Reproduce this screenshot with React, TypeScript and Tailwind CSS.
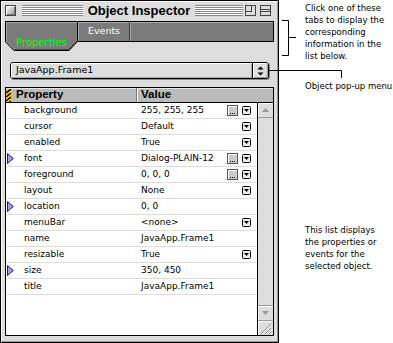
import React from 'react';

type Row = { name: string; value: string; dots?: boolean; drop?: boolean; tri?: boolean };

const rows: Row[] = [
  { name: 'background', value: '255, 255, 255', dots: true, drop: true },
  { name: 'cursor', value: 'Default', drop: true },
  { name: 'enabled', value: 'True', drop: true },
  { name: 'font', value: 'Dialog-PLAIN-12', dots: true, drop: true, tri: true },
  { name: 'foreground', value: '0, 0, 0', dots: true, drop: true },
  { name: 'layout', value: 'None', drop: true },
  { name: 'location', value: '0, 0', tri: true },
  { name: 'menuBar', value: '<none>', drop: true },
  { name: 'name', value: 'JavaApp.Frame1' },
  { name: 'resizable', value: 'True', drop: true },
  { name: 'size', value: '350, 450', tri: true },
  { name: 'title', value: 'JavaApp.Frame1' },
];

function Tri() {
  return (
    <svg width="7" height="11" viewBox="0 0 7 11">
      <polygon points="0.5,0.5 6.3,5.5 0.5,10.5" fill="#9c9cff" stroke="#222" strokeWidth="1" strokeLinejoin="round" />
    </svg>
  );
}

function Dots() {
  return (
    <div className="w-[11px] h-[11px] border border-[#555555] bg-[#cccccc] shadow-[inset_1px_1px_0_#ffffff] flex items-end justify-center gap-[1px] pb-[1px]">
      <i className="block w-[1px] h-[1px] bg-black" />
      <i className="block w-[1px] h-[1px] bg-black" />
      <i className="block w-[1px] h-[1px] bg-black" />
    </div>
  );
}

function Drop() {
  return (
    <svg width="9" height="9" viewBox="0 0 9 9">
      <rect x="0.5" y="0.5" width="8" height="8" rx="1" fill="#eeeeee" stroke="#000" />
      <polygon points="2,3 7,3 4.5,6" fill="#000" />
    </svg>
  );
}

function Stripes({ w }: { w: string }) {
  return (
    <div
      className={`${w} h-[11px] bg-[repeating-linear-gradient(to_bottom,#888888_0px,#888888_1px,#ffffff_1px,#ffffff_2px)]`}
    />
  );
}

function TitleBar() {
  return (
    <div className="h-[19px] shrink-0 flex items-center pl-[4px] pr-[7px]">
      <div className="w-[11px] h-[11px] border border-[#444444] bg-[linear-gradient(135deg,#ffffff,#999999)] shadow-[inset_1px_1px_0_#ffffff,inset_-1px_-1px_0_#777777]" />
      <div className="ml-[6px] w-[61px]">
        <Stripes w="w-[61px]" />
      </div>
      <div className="flex-1 text-center font-['Liberation_Sans',sans-serif] font-bold text-[13px] leading-[19px]">
        Object Inspector
      </div>
      <Stripes w="w-[48px]" />
      <svg className="ml-[2px]" width="11" height="11" viewBox="0 0 11 11">
        <rect x="0.5" y="0.5" width="10" height="10" fill="#dddddd" stroke="#444" />
        <rect x="0.5" y="0.5" width="6" height="6" fill="none" stroke="#444" />
      </svg>
      <svg className="ml-[4px]" width="11" height="11" viewBox="0 0 11 11">
        <rect x="0.5" y="0.5" width="10" height="10" fill="#dddddd" stroke="#444" />
        <path d="M1 4.5H10M1 6.5H10" stroke="#444" />
      </svg>
    </div>
  );
}

function Tabs() {
  return (
    <div className="flex items-start h-[30px] shrink-0">
      <div className="relative w-[73px] h-[30px] flex items-end justify-center pb-[3px]">
        <svg className="absolute left-0 top-0" width="73" height="30" viewBox="0 0 73 30">
          <polygon points="0,0 73,0 73,20 64,30 9,30 0,21" fill="#7b7b7b" />
          <path d="M1.5,1 V20.5 L9.5,28.5" fill="none" stroke="#a8a8a8" />
          <path d="M1,1.5 H72" fill="none" stroke="#a8a8a8" />
          <path d="M10,28.5 H63.5 L71.5,20.5" fill="none" stroke="#4a4a4a" />
          <path d="M0.5,0 V20.5 L9,29.5 H64 L72.5,20.5 V0 M0,0.5 H73" fill="none" stroke="#000" />
        </svg>
        <span className="relative text-[#00ff00] text-[10px] leading-[11px]">Properties</span>
      </div>
      <div className="flex-1 h-[21px] flex bg-[#7b7b7b] border-y border-r border-black">
        <div className="w-[52px] flex items-center justify-center text-white text-[9.5px] border-l border-l-[#aaaaaa] border-r border-r-[#3a3a3a] shadow-[inset_0_1px_0_#aaaaaa]">
          Events
        </div>
        <div className="flex-1 border-l border-[#aaaaaa] shadow-[inset_0_1px_0_#aaaaaa]" />
      </div>
    </div>
  );
}

function Popup() {
  return (
    <div className="mt-[11px] mx-[5px] h-[17px] shrink-0 flex rounded-[3px] border border-black bg-[#dddddd] shadow-[1px_1px_0_#888888]">
      <div className="flex-1 flex items-center pl-[5px] text-[9.5px] rounded-l-[2px] shadow-[inset_1px_1px_0_#ffffff,inset_-1px_-1px_0_#aaaaaa]">
        JavaApp.Frame1
      </div>
      <div className="w-[16px] flex items-center justify-center border-l border-black rounded-r-[2px] shadow-[inset_1px_1px_0_#ffffff,inset_-1px_-1px_0_#999999]">
        <svg width="7" height="10" viewBox="0 0 7 10">
          <polygon points="3.5,0.5 6.5,3.5 0.5,3.5" fill="#000" />
          <polygon points="0.5,6.5 6.5,6.5 3.5,9.5" fill="#000" />
        </svg>
      </div>
    </div>
  );
}

function Header() {
  return (
    <div className="flex h-[15px] shrink-0 border-b border-black bg-[#bbbbbb] shadow-[inset_0_1px_0_#e6e6e6] font-['Liberation_Sans',sans-serif] font-bold text-[11.5px]">
      <div className="w-[131px] flex items-center border-r border-[#777777]">
        <div className="w-[10px] flex items-center">
          <svg width="5" height="13" viewBox="0 0 5 13">
            <rect x="0" y="0" width="5" height="13" fill="#ffcc00" />
            <path d="M0,4 L5,0 M0,8 L5,4 M0,12 L5,8 M0,16 L5,12" stroke="#000" strokeWidth="1.6" />
          </svg>
        </div>
        <span>Property</span>
      </div>
      <div className="flex-1 flex items-center pl-[3px] border-l border-white">Value</div>
    </div>
  );
}

function Scrollbar() {
  return (
    <div className="w-[16px] shrink-0 border-l border-black bg-[#dddddd] flex flex-col">
      <div className="h-[15px] flex items-center justify-center border-b border-[#999999] shadow-[inset_1px_1px_0_#ffffff]">
        <svg width="7" height="4" viewBox="0 0 7 4">
          <polygon points="3.5,0 7,4 0,4" fill="#999999" />
        </svg>
      </div>
      <div className="flex-1" />
      <div className="h-[15px] flex items-center justify-center border-t border-[#999999] shadow-[inset_1px_1px_0_#ffffff]">
        <svg width="7" height="4" viewBox="0 0 7 4">
          <polygon points="0,0 7,0 3.5,4" fill="#999999" />
        </svg>
      </div>
      <div className="h-[15px] border-t border-[#999999] shadow-[inset_1px_1px_0_#ffffff]">
        <svg width="15" height="14" viewBox="0 0 15 14">
          <path d="M3,13 L13,3 M7,13 L13,7 M11,13 L13,11" stroke="#888888" />
          <path d="M4,13 L13,4 M8,13 L13,8 M12,13 L13,12" stroke="#ffffff" />
        </svg>
      </div>
    </div>
  );
}

function List() {
  return (
    <div className="mt-[8px] h-[249px] shrink-0 border border-black bg-white flex flex-col">
      <Header />
      <div className="flex-1 flex min-h-0">
        <div className="flex-1 flex flex-col text-[9px]">
          {rows.map((r) => (
            <div key={r.name} className="flex h-[16px] shrink-0 border-b border-[#dddddd]">
              <div className="w-[131px] flex items-center">
                <div className="w-[18px] pl-[1px] flex items-center">{r.tri ? <Tri /> : null}</div>
                <span>{r.name}</span>
              </div>
              <div className="flex-1 flex items-center pl-[4px] pr-[6px]">
                <span className="flex-1 whitespace-nowrap">{r.value}</span>
                {r.dots ? <Dots /> : null}
                {r.drop ? (
                  <div className="ml-[4px] flex items-center">
                    <Drop />
                  </div>
                ) : null}
              </div>
            </div>
          ))}
        </div>
        <Scrollbar />
      </div>
    </div>
  );
}

function Window() {
  return (
    <div className="w-[279px] h-[343px] shrink-0 border border-black bg-[#dddddd] flex flex-col shadow-[inset_1px_1px_0_#ffffff,inset_-1px_-1px_0_#999999]">
      <TitleBar />
      <div className="flex flex-col px-[4px] mt-[1px]">
        <Tabs />
        <Popup />
        <List />
      </div>
    </div>
  );
}

export default function App() {
  return (
    <div className="relative flex w-[393px] h-[343px] bg-white overflow-hidden font-['DejaVu_Sans',sans-serif] text-black">
      <Window />
      <div className="flex-1 min-w-0 pl-[26px] text-[8.5px] leading-[12px] whitespace-nowrap">
        <div className="mt-[2px]">
          <div>Click one of these</div>
          <div>tabs to display the</div>
          <div>corresponding</div>
          <div>information in the</div>
          <div>list below.</div>
        </div>
        <div className="mt-[18px]">Object pop-up menu</div>
        <div className="mt-[132px]">
          <div>This list displays</div>
          <div>the properties or</div>
          <div>events for the</div>
          <div>selected object.</div>
        </div>
      </div>
      <svg className="absolute left-0 top-0 pointer-events-none" width="393" height="343" viewBox="0 0 393 343">
        <path d="M282 20.5H288.5V55.5H282M288.5 37.5H296" fill="none" stroke="#000" />
        <path d="M269 70.5H341.5V78" fill="none" stroke="#000" />
      </svg>
    </div>
  );
}
